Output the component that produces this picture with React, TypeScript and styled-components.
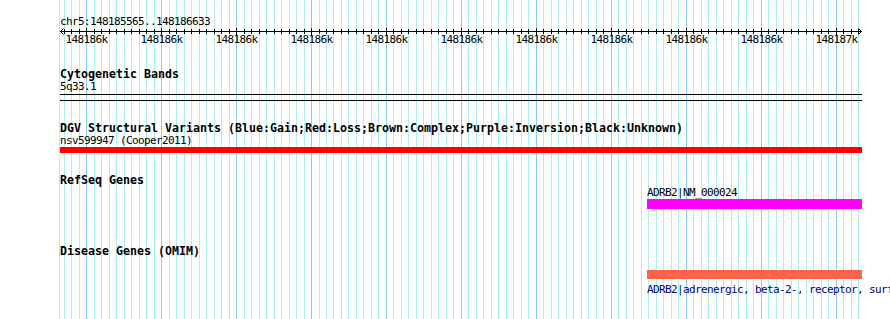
import React from "react";
import styled, { createGlobalStyle } from "styled-components";

const START = 148185565;
const END = 148186633;
const LEFT = 60;
const RIGHT = 861;
const SCALE = (RIGHT - LEFT) / (END - START + 1);
const xOf = (bp: number) => LEFT + (bp - START) * SCALE;

const Global = createGlobalStyle`
  html, body { margin: 0; padding: 0; background: #ffffff; }
  body { width: 890px; height: 319px; overflow: hidden; }
`;

const Panel = styled.div`
  position: relative;
  width: 890px;
  height: 319px;
  background: #ffffff;
  overflow: hidden;
  font-family: "DejaVu Sans Mono", "Liberation Mono", monospace;
  color: #000000;
`;

const GridLayer = styled.svg`
  position: absolute;
  left: 0;
  top: 0;
  width: 890px;
  height: 319px;
`;

const Tracks = styled.div`
  position: relative;
  display: flex;
  flex-direction: column;
  padding-left: ${LEFT}px;
`;

const Label = styled.div<{ $mt: number; $indent?: number; $color?: string }>`
  margin-top: ${(p) => p.$mt}px;
  margin-left: ${(p) => p.$indent ?? 0}px;
  font-size: 11px;
  letter-spacing: -0.62px;
  line-height: 11px;
  height: 11px;
  white-space: nowrap;
  color: ${(p) => p.$color ?? "#000000"};
`;

const Title = styled.div<{ $mt: number }>`
  margin-top: ${(p) => p.$mt}px;
  font-size: 11.63px;
  font-weight: bold;
  line-height: 12px;
  height: 12px;
  white-space: nowrap;
`;

const RulerSvg = styled.svg`
  display: block;
  width: 802px;
  height: 19px;
  overflow: visible;
`;

const RulerText = styled.text`
  font-family: "DejaVu Sans Mono", "Liberation Mono", monospace;
  font-size: 11px;
  letter-spacing: -0.62px;
`;

const BandBox = styled.div<{ $mt: number }>`
  margin-top: ${(p) => p.$mt}px;
  width: ${RIGHT - LEFT + 1}px;
  height: 5px;
  border-top: 1px solid #000000;
  border-bottom: 1px solid #000000;
`;

const Bar = styled.div<{ $mt: number; $h: number; $color: string }>`
  margin-top: ${(p) => p.$mt}px;
  height: ${(p) => p.$h}px;
  background: ${(p) => p.$color};
`;

function Grid() {
  const lines: React.ReactNode[] = [];
  lines.push(<line key="edge" x1={59.5} x2={59.5} y1={0} y2={319} stroke="#afeeee" strokeWidth={1} />);
  for (let bp = Math.ceil(START / 10) * 10; bp <= END; bp += 10) {
    const x = Math.round(xOf(bp)) + 0.5;
    const major = bp % 100 === 0;
    lines.push(
      <line key={bp} x1={x} x2={x} y1={0} y2={319} stroke={major ? "#87ceeb" : "#afeeee"} strokeWidth={1} />
    );
  }
  return (
    <GridLayer viewBox="0 0 890 319" aria-hidden>
      {lines}
    </GridLayer>
  );
}

function Ruler() {
  const cy = 4.5;
  const ticks: React.ReactNode[] = [];
  const labels: React.ReactNode[] = [];
  for (let bp = Math.ceil(START / 10) * 10; bp <= END; bp += 10) {
    const x = Math.round(xOf(bp)) - LEFT + 0.5;
    const major = bp % 100 === 0;
    const h = major ? 3 : 2;
    ticks.push(<line key={bp} x1={x} x2={x} y1={cy - h - 0.5} y2={cy + h + 0.5} stroke="#000" strokeWidth={1} />);
    if (major) {
      const k = Math.round(bp / 1000 - 0.0001);
      labels.push(
        <RulerText key={`l${bp}`} x={x - 21} y={16}>
          {`${k}k`}
        </RulerText>
      );
    }
  }
  const w = RIGHT - LEFT;
  return (
    <RulerSvg viewBox="0 0 802 19">
      <line x1={0} x2={w + 0.5} y1={cy} y2={cy} stroke="#000" strokeWidth={1} />
      <polyline points={`3.5,${cy - 3} 0.5,${cy} 3.5,${cy + 3}`} fill="none" stroke="#000" strokeWidth={1} />
      <polyline points={`${w - 2.5},${cy - 3} ${w + 0.5},${cy} ${w - 2.5},${cy + 3}`} fill="none" stroke="#000" strokeWidth={1} />
      {ticks}
      {labels}
    </RulerSvg>
  );
}

const FEATURE_LEFT = 647 - LEFT;
const FEATURE_WIDTH = 862 - 647;

export default function App() {
  return (
    <>
      <Global />
      <Panel>
        <Grid />
        <Tracks>
          <Label $mt={16}>chr5:148185565..148186633</Label>
          <Ruler />

          <Title $mt={22}>Cytogenetic Bands</Title>
          <Label $mt={1}>5q33.1</Label>
          <BandBox $mt={2} />

          <Title $mt={21}>DGV Structural Variants (Blue:Gain;Red:Loss;Brown:Complex;Purple:Inversion;Black:Unknown)</Title>
          <Label $mt={1}>nsv599947 (Cooper2011)</Label>
          <Bar $mt={1} $h={6} $color="#ff0000" style={{ width: RIGHT - LEFT + 1 }} />

          <Title $mt={21}>RefSeq Genes</Title>
          <Label $mt={1} $indent={FEATURE_LEFT}>ADRB2|NM_000024</Label>
          <Bar $mt={1} $h={10} $color="#ff00ff" style={{ marginLeft: FEATURE_LEFT, width: FEATURE_WIDTH }} />

          <Title $mt={36}>Disease Genes (OMIM)</Title>
          <Bar $mt={13} $h={9} $color="#ff6347" style={{ marginLeft: FEATURE_LEFT, width: FEATURE_WIDTH }} />
          <Label $mt={5} $indent={FEATURE_LEFT} $color="#000080">
            ADRB2|adrenergic, beta-2-, receptor, surface
          </Label>
        </Tracks>
      </Panel>
    </>
  );
}
